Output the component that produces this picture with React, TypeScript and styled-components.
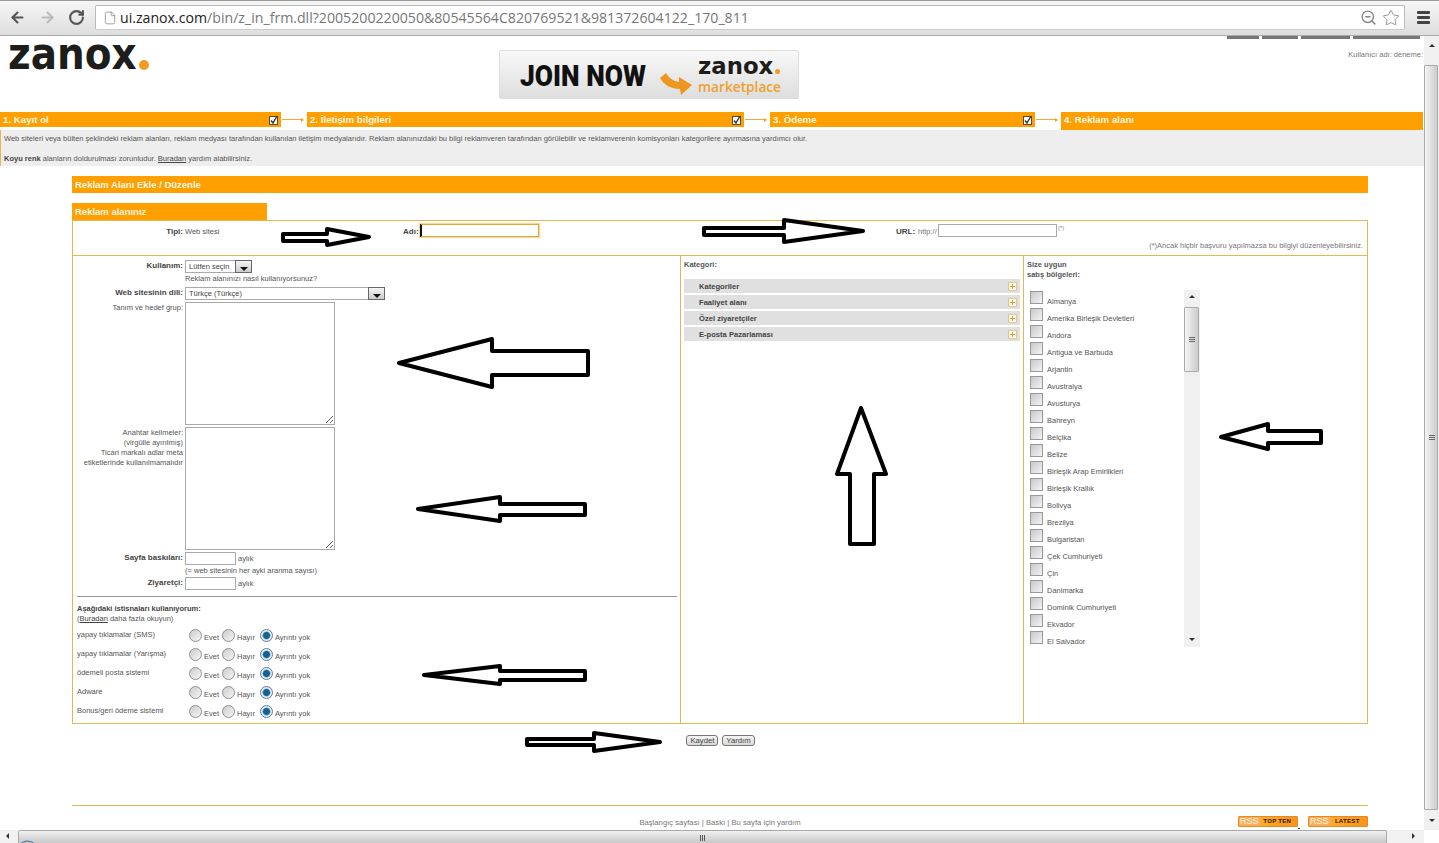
import * as React from 'react';
import styled, { createGlobalStyle } from 'styled-components';
import { ArrowLeft, ArrowRight, File, RotateCw, Star, ZoomOut } from 'lucide-react';

const ORANGE = '#ffa000';
const LINE = '#e8b552';
const TEXT = '#555';

const GlobalStyle = createGlobalStyle`
  html, body {
    margin: 0;
    padding: 0;
    overflow: hidden;
    background: #fff;
  }
  * {
    box-sizing: border-box;
  }
`;

const Page = styled.div`
  position: relative;
  display: grid;
  grid-template-rows: 36px 794px 13px;
  width: 1439px;
  height: 843px;
  overflow: hidden;
  font-family: 'Liberation Sans', Arial, sans-serif;
  font-size: 7.5px;
  color: ${TEXT};
  background: #fff;
`;

/* browser chrome */
const Toolbar = styled.div`
  display: flex;
  align-items: center;
  height: 36px;
  padding: 0 0 1px 9px;
  border-top: 1px solid #999;
  border-bottom: 1px solid #aaa;
  background: linear-gradient(#f6f6f6, #dedede);
`;

const NavIcon = styled.span<{ $gap: number }>`
  display: flex;
  margin-right: ${(p) => p.$gap}px;
`;

const Omnibox = styled.div`
  display: flex;
  align-items: center;
  width: 1310px;
  height: 25px;
  padding: 0 4px 0 7px;
  border: 1px solid #bbb;
  border-bottom-color: #ccc;
  border-radius: 2px;
  background: #fff;
`;

const UrlText = styled.div`
  flex: 1;
  margin-left: 3px;
  font-family: 'Open Sans', sans-serif;
  font-size: 14.15px;
  color: #777;
  white-space: nowrap;
  b {
    font-weight: 400;
    color: #222;
  }
`;

const MenuIcon = styled.div`
  display: flex;
  flex-direction: column;
  gap: 2px;
  width: 13px;
  margin-left: 12px;
  i {
    display: block;
    height: 3px;
    border-radius: 1px;
    background: #444;
  }
`;

/* viewport */
const Viewport = styled.div`
  display: grid;
  grid-template-columns: 1424px 15px;
  height: 794px;
`;

const Content = styled.div`
  min-width: 0;
`;

const Header = styled.div`
  display: grid;
  grid-template-columns: 499px 300px 1fr;
  height: 76px;
`;

const Logo = styled.div`
  display: flex;
  align-items: flex-start;
  height: 40px;
  padding-left: 8px;
  font-family: 'DejaVu Sans', sans-serif;
  font-size: 39px;
  font-weight: 700;
  line-height: 40px;
  color: #1d1d1b;
`;

const LogoWord = styled.span`
  display: inline-block;
  transform: scaleY(1.12);
  transform-origin: left 34px;
`;

const LogoDot = styled.i<{ $size: number; $top: number }>`
  display: block;
  flex: none;
  width: ${(p) => p.$size}px;
  height: ${(p) => p.$size}px;
  margin: ${(p) => p.$top}px 0 0 2px;
  border-radius: 50%;
  background: #f39c1f;
`;

const Banner = styled.div`
  display: flex;
  align-items: flex-start;
  width: 300px;
  height: 49px;
  margin-top: 14px;
  padding-left: 20px;
  border: 1px solid #ddd;
  border-radius: 2px;
  background: linear-gradient(#f8f8f8, #dedede);
`;

const JoinNow = styled.div`
  width: 139px;
  margin-top: 10px;
  font-family: 'Roboto', sans-serif;
  font-size: 30px;
  font-weight: 900;
  line-height: 30px;
  color: #111;
  transform: scaleX(0.88);
  transform-origin: left center;
  white-space: nowrap;
`;

const MarketArrowIcon = styled.svg`
  flex: none;
  margin-top: 19px;
`;

const BannerBrand = styled.div`
  margin: 7px 0 0 5px;
`;

const BannerZanox = styled.div`
  display: flex;
  align-items: flex-start;
  height: 17px;
  font-family: 'DejaVu Sans', sans-serif;
  font-size: 22.8px;
  font-weight: 700;
  line-height: 17px;
  color: #1d1d1b;
`;

const Marketplace = styled.div`
  margin-top: 4px;
  font-family: 'Open Sans', sans-serif;
  font-size: 13.7px;
  font-weight: 600;
  line-height: 15px;
  color: #f0a030;
  white-space: nowrap;
`;

const UserArea = styled.div`
  display: flex;
  flex-direction: column;
  align-items: flex-end;
  padding-right: 1px;
`;

const TopLinks = styled.div`
  display: flex;
  gap: 3px;
  margin-right: 3px;
`;

const TopLink = styled.i<{ $w: number }>`
  display: block;
  width: ${(p) => p.$w}px;
  height: 3px;
  background: #777;
`;

const UserName = styled.div`
  margin-top: 11px;
  color: #777;
`;

const Steps = styled.div`
  display: flex;
  align-items: flex-start;
  height: 18px;
`;

const Step = styled.div<{ $w: number; $current?: boolean }>`
  display: flex;
  align-items: center;
  justify-content: space-between;
  width: ${(p) => p.$w}px;
  height: ${(p) => (p.$current ? 18 : 15)}px;
  padding: ${(p) => (p.$current ? '0 0 3px 3px' : '0 3px 0 3px')};
  background: ${ORANGE};
  font-size: 9.7px;
  font-weight: 700;
  color: #fff6e0;
`;

const StepLink = styled.div`
  position: relative;
  flex: none;
  width: 26px;
  height: 15px;
  &::before {
    content: '';
    position: absolute;
    left: 1px;
    right: 4px;
    top: 7px;
    height: 1px;
    background: #f0a93a;
  }
  &::after {
    content: '';
    position: absolute;
    right: 3px;
    top: 5.5px;
    border-left: 3px solid ${ORANGE};
    border-top: 2px solid transparent;
    border-bottom: 2px solid transparent;
  }
`;

const Info = styled.div`
  height: 36px;
  padding: 4px 0 0 3px;
  border-left: 1px solid ${LINE};
  background: #eee;
  line-height: 10px;
  b {
    color: #444;
  }
  u {
    color: #444;
  }
`;

const InfoGap = styled.div`
  height: 10px;
`;

const Main = styled.div`
  width: 1296px;
  margin: 10px 0 0 72px;
`;

const TitleBar = styled.div`
  height: 17px;
  padding-left: 3px;
  background: ${ORANGE};
  font-size: 9.5px;
  font-weight: 700;
  line-height: 17px;
  color: #fff6e0;
`;

const Tab = styled(TitleBar)`
  width: 195px;
  margin-top: 10px;
`;

const TopBox = styled.div`
  position: relative;
  display: flex;
  height: 35px;
  padding-top: 3px;
  border: 1px solid ${LINE};
  border-bottom: 0;
`;

const Slot = styled.div<{ $w: number }>`
  display: flex;
  align-items: flex-start;
  flex: none;
  width: ${(p) => p.$w}px;
  line-height: 13px;
`;

const RightLabel = styled.span<{ $strong?: boolean }>`
  flex: none;
  width: 112px;
  padding: 1px 2px 0 0;
  text-align: right;
  white-space: nowrap;
  line-height: 10px;
  font-size: ${(p) => (p.$strong ? 8 : 7.5)}px;
  font-weight: ${(p) => (p.$strong ? 700 : 400)};
  color: ${(p) => (p.$strong ? '#444' : TEXT)};
`;

const TypeLabel = styled(RightLabel)`
  padding-top: 3px;
`;

const SlotText = styled.span`
  padding-top: 3px;
  line-height: 10px;
  white-space: nowrap;
`;

const InlineLabel = styled(SlotText)<{ $w: number; $strong?: boolean }>`
  flex: none;
  width: ${(p) => p.$w}px;
  font-size: ${(p) => (p.$strong ? 8 : 7.5)}px;
  font-weight: ${(p) => (p.$strong ? 700 : 400)};
  color: ${(p) => (p.$strong ? '#444' : '#777')};
`;

const RequiredMark = styled.span`
  margin-left: 1px;
  font-size: 6px;
  line-height: 8px;
  color: #888;
`;

const TextInput = styled.input<{ $w: number; $focus?: boolean }>`
  display: block;
  flex: none;
  width: ${(p) => p.$w}px;
  height: 13px;
  margin: 0;
  padding: 0 1px;
  border: 1px solid ${(p) => (p.$focus ? '#e2a93a' : '#aaa')};
  background: #fff;
  outline: none;
  ${(p) => p.$focus && 'box-shadow: 0 0 1px 1px #f6d9a0; border-left: 2px solid #111;'}
`;

const TopNote = styled.div`
  position: absolute;
  right: 4px;
  bottom: 5px;
  color: #777;
`;

const Columns = styled.div`
  display: grid;
  grid-template-columns: 608px 343px 1fr;
  height: 469px;
  border: 1px solid ${LINE};
`;

const FormColumn = styled.div`
  border-right: 1px solid ${LINE};
  padding-top: 4px;
`;

const FormGrid = styled.div`
  display: grid;
  grid-template-columns: 112px 1fr;
  row-gap: 2px;
`;

const Field = styled.div`
  display: flex;
  align-items: flex-start;
  line-height: 10px;
`;

const FieldNote = styled(Field)<{ $h: number }>`
  height: ${(p) => p.$h}px;
  line-height: 8px;
`;

const Suffix = styled.span`
  margin: 2px 0 0 2px;
`;

const SelectBox = styled.div<{ $w: number }>`
  display: flex;
  align-items: stretch;
  justify-content: space-between;
  width: ${(p) => p.$w}px;
  height: 13px;
  padding-left: 3px;
  border: 1px solid #aaa;
  line-height: 12px;
  white-space: nowrap;
  color: #444;
`;

const SelectArrow = styled.span`
  position: relative;
  flex: none;
  width: 17px;
  margin: -1px -1px -1px 0;
  border: 1px solid #666;
  background: linear-gradient(#f4f4f4, #ccc);
  &::after {
    content: '';
    position: absolute;
    left: 4px;
    bottom: 1px;
    border-top: 4px solid #111;
    border-left: 4px solid transparent;
    border-right: 4px solid transparent;
  }
`;

const Area = styled.textarea`
  display: block;
  width: 150px;
  height: 123px;
  margin: 0;
  padding: 2px;
  border: 1px solid #aaa;
  background: #fff;
  outline: none;
`;

const Rule = styled.div`
  height: 1px;
  margin: 6px 3px 7px 4px;
  background: #999;
`;

const Exceptions = styled.div`
  padding-left: 4px;
  line-height: 10px;
  b {
    color: #444;
  }
  u {
    color: #444;
  }
`;

const ExceptionRow = styled.div`
  display: flex;
  align-items: flex-start;
  height: 19px;
  &:first-of-type {
    margin-top: 2px;
  }
`;

const ExceptionName = styled.span`
  flex: none;
  width: 112px;
  padding-top: 4px;
`;

const RadioOption = styled.label<{ $w: number }>`
  display: flex;
  align-items: flex-start;
  flex: none;
  width: ${(p) => p.$w}px;
  padding-top: 3px;
  span {
    margin: 4px 0 0 2px;
  }
`;

const Radio = styled.input.attrs({ type: 'radio' })`
  appearance: none;
  flex: none;
  width: 13px;
  height: 13px;
  margin: 0;
  border: 1px solid #8f8f8f;
  border-radius: 50%;
  background: linear-gradient(135deg, #ccc, #f6f6f6);
  &:checked {
    background: radial-gradient(circle, #16618f 0 3px, #3d8ac0 3.4px, #e8eef3 4.4px);
    border-color: #5c7f99;
  }
`;

const CategoryColumn = styled.div`
  border-right: 1px solid ${LINE};
  padding: 4px 3px 0 3px;
`;

const ColumnTitle = styled.div`
  height: 19px;
  line-height: 10px;
  font-weight: 700;
  color: #555;
`;

const Categories = styled.div`
  display: flex;
  flex-direction: column;
  gap: 2px;
`;

const CategoryRow = styled.div`
  display: flex;
  align-items: center;
  justify-content: space-between;
  height: 14px;
  padding: 0 3px 0 15px;
  background: #e0e0e0;
  font-size: 7.6px;
  font-weight: 700;
  color: #444;
`;

const PlusBox = styled.i`
  position: relative;
  display: block;
  width: 9px;
  height: 9px;
  border: 1px solid #f4c27a;
  background: #fff;
  &::before,
  &::after {
    content: '';
    position: absolute;
    background: #ee9a1f;
  }
  &::before {
    left: 1px;
    right: 1px;
    top: 3px;
    height: 1px;
  }
  &::after {
    top: 1px;
    bottom: 1px;
    left: 3px;
    width: 1px;
  }
`;

const RegionColumn = styled.div`
  padding: 4px 0 0 3px;
`;

const RegionTitle = styled(ColumnTitle)`
  height: 30px;
`;

const RegionList = styled.div`
  display: grid;
  grid-template-columns: 157px 16px;
  width: 173px;
  height: 357px;
`;

const RegionItems = styled.div`
  padding-left: 3px;
`;

const RegionItem = styled.label`
  display: flex;
  align-items: flex-start;
  height: 17px;
  padding-top: 1px;
  span {
    margin: 6px 0 0 4px;
    line-height: 10px;
  }
`;

const Check = styled.input.attrs({ type: 'checkbox' })`
  appearance: none;
  flex: none;
  width: 13px;
  height: 13px;
  margin: 0;
  border: 1px solid #999;
  background: linear-gradient(135deg, #c8c8c8, #f4f4f4);
`;

const ScrollTrack = styled.div<{ $thumbTop: number; $thumbBottom: number }>`
  position: relative;
  height: 100%;
  background: #f0f0f0;
  &::before {
    content: '';
    position: absolute;
    top: ${(p) => p.$thumbTop}px;
    bottom: ${(p) => p.$thumbBottom}px;
    left: 0;
    right: 1px;
    border: 1px solid #aaa;
    border-radius: 1px;
    background: linear-gradient(90deg, #f4f4f4, #ccc);
  }
`;

const ArrowUp = styled.i<{ $top: number }>`
  position: absolute;
  top: ${(p) => p.$top}px;
  left: 50%;
  margin-left: -3px;
  border-bottom: 3px solid #333;
  border-left: 3px solid transparent;
  border-right: 3px solid transparent;
`;

const ArrowDown = styled.i<{ $bottom: number }>`
  position: absolute;
  bottom: ${(p) => p.$bottom}px;
  left: 50%;
  margin-left: -3px;
  border-top: 3px solid #333;
  border-left: 3px solid transparent;
  border-right: 3px solid transparent;
`;

const Grip = styled.i<{ $top: string }>`
  position: absolute;
  top: ${(p) => p.$top};
  left: 50%;
  width: 6px;
  height: 5px;
  margin: -2px 0 0 -3px;
  border-top: 1px solid #666;
  border-bottom: 1px solid #666;
  &::after {
    content: '';
    display: block;
    height: 1px;
    margin-top: 1px;
    background: #666;
  }
`;

const Actions = styled.div`
  display: flex;
  justify-content: center;
  gap: 4px;
  height: 81px;
  padding: 11px 0 0 1px;
`;

const ActionButton = styled.button`
  height: 11px;
  margin: 0;
  padding: 0 3px;
  border: 1px solid #777;
  border-radius: 3px;
  background: linear-gradient(#f4f4f4, #d8d8d8);
  font-family: inherit;
  font-size: 7.7px;
  line-height: 8px;
  color: #444;
`;

const Footer = styled.div`
  display: grid;
  grid-template-columns: 1fr 130px;
  height: 25px;
  padding-top: 10px;
  border-top: 1px solid ${LINE};
`;

const FooterLinks = styled.div`
  padding: 2px 0 0 130px;
  font-size: 7.7px;
  text-align: center;
  color: #777;
`;

const FeedBadges = styled.div`
  display: flex;
  gap: 10px;
`;

const FeedBadge = styled.div`
  display: flex;
  align-items: center;
  width: 60px;
  height: 11px;
  padding: 0 1px;
  border: 1px solid #e58a1c;
  border-radius: 1px;
  background: linear-gradient(90deg, #f8ae5f 0 20px, #ffa726 24px, #f7931e);
  font-size: 9px;
  line-height: 9px;
  color: #fff3dd;
  b {
    flex: 1;
    text-align: center;
    font-size: 6px;
    color: #2a1a00;
    letter-spacing: 0.3px;
  }
`;

const PageScroll = styled.div`
  background: #f2f2f2;
`;

const HorizontalBar = styled.div`
  display: grid;
  grid-template-columns: 18px 1369px 37px 15px;
  height: 13px;
`;

const HButton = styled.div`
  position: relative;
  background: #f2f2f2;
`;

const HThumb = styled.div`
  position: relative;
  border: 1px solid #aaa;
  border-bottom: 0;
  border-radius: 2px 2px 0 0;
  background: linear-gradient(#f0f0f0, #c8c8c8);
`;

const HArrow = styled.i<{ $dir: 'left' | 'right'; $x: number }>`
  position: absolute;
  top: 3px;
  left: ${(p) => p.$x}px;
  border-top: 3px solid transparent;
  border-bottom: 3px solid transparent;
  ${(p) => (p.$dir === 'left' ? 'border-right: 3px solid #333;' : 'border-left: 3px solid #333;')}
`;

const HGrip = styled.i`
  position: absolute;
  left: 681px;
  top: 4px;
  width: 5px;
  height: 6px;
  border-left: 1px solid #555;
  border-right: 1px solid #555;
  &::after {
    content: '';
    display: block;
    width: 1px;
    height: 6px;
    margin-left: 1px;
    background: #555;
  }
`;

const Annotations = styled.svg`
  position: absolute;
  left: 0;
  top: 0;
  pointer-events: none;
`;

const handDrawnArrows = [
  '283,234 327,234 327,229 369,237 327,245 327,241 283,241',
  '704,228 784,228 784,220 863,231 784,242 784,235 704,235',
  '588,351 492,351 492,339 399,363 492,387 492,375 588,375',
  '585,504 500,504 500,497 418,509 500,521 500,515 585,515',
  '850,544 850,474 837,474 861,408 886,474 874,474 874,544',
  '1321,431 1268,431 1268,424 1221,437 1268,449 1268,443 1321,443',
  '585,671 500,671 500,666 424,675 500,684 500,680 585,680',
  '527,739 594,739 594,733 660,742 594,751 594,745 527,745',
];

const regions = [
  'Almanya',
  'Amerika Birleşik Devletleri',
  'Andora',
  'Antigua ve Barbuda',
  'Arjantin',
  'Avustralya',
  'Avusturya',
  'Bahreyn',
  'Belçika',
  'Belize',
  'Birleşik Arap Emirlikleri',
  'Birleşik Krallık',
  'Bolivya',
  'Brezilya',
  'Bulgaristan',
  'Çek Cumhuriyeti',
  'Çin',
  'Danimarka',
  'Dominik Cumhuriyeti',
  'Ekvador',
  'El Salvador',
];

const exceptions = [
  'yapay tıklamalar (SMS)',
  'yapay tıklamalar (Yarışma)',
  'ödemeli posta sistemi',
  'Adware',
  'Bonus/geri ödeme sistemi',
];

const categories = ['Kategoriler', 'Faaliyet alanı', 'Özel ziyaretçiler', 'E-posta Pazarlaması'];

const StepCheck = () => (
  <svg width="9" height="10" viewBox="0 0 9 10">
    <rect x="0.5" y="1.5" width="8" height="8" fill="#fff" stroke="#5a4a30" />
    <path d="M2 5.5 L4 8 L8 1" fill="none" stroke="#333" strokeWidth="1.4" />
  </svg>
);

const MarketArrow = () => (
  <MarketArrowIcon width="34" height="26" viewBox="0 0 34 26">
    <path
      d="M1 8 L7 3 C10 8 14 11 20 12 L20 7 L33 15 L22 25 L21 19 C12 19 5 15 1 8 Z"
      fill="#ee9620"
    />
  </MarketArrowIcon>
);

export default function App() {
  return (
    <Page>
      <GlobalStyle />
      <Toolbar>
        <NavIcon $gap={13}>
          <ArrowLeft size={17} color="#555" strokeWidth={3} />
        </NavIcon>
        <NavIcon $gap={12}>
          <ArrowRight size={17} color="#bbb" strokeWidth={3} />
        </NavIcon>
        <NavIcon $gap={10}>
          <RotateCw size={17} color="#555" strokeWidth={3} />
        </NavIcon>
        <Omnibox>
          <File size={14} color="#888" strokeWidth={1.3} />
          <UrlText>
            <b>ui.zanox.com</b>/bin/z_in_frm.dll?2005200220050&amp;80545564C820769521&amp;981372604122_170_811
          </UrlText>
          <NavIcon $gap={5}>
            <ZoomOut size={17} color="#888" strokeWidth={2} />
          </NavIcon>
          <Star size={18} color="#888" strokeWidth={1.2} />
        </Omnibox>
        <MenuIcon>
          <i />
          <i />
          <i />
        </MenuIcon>
      </Toolbar>

      <Viewport>
        <Content>
          <Header>
            <Logo>
              <LogoWord>zanox</LogoWord>
              <LogoDot $size={10} $top={24} />
            </Logo>
            <Banner>
              <JoinNow>JOIN NOW</JoinNow>
              <MarketArrow />
              <BannerBrand>
                <BannerZanox>
                  zanox
                  <LogoDot $size={5} $top={11} />
                </BannerZanox>
                <Marketplace>marketplace</Marketplace>
              </BannerBrand>
            </Banner>
            <UserArea>
              <TopLinks>
                <TopLink $w={32} />
                <TopLink $w={36} />
                <TopLink $w={49} />
                <TopLink $w={67} />
              </TopLinks>
              <UserName>Kullanıcı adı: deneme:</UserName>
            </UserArea>
          </Header>

          <Steps>
            <Step $w={281}>
              1. Kayıt ol
              <StepCheck />
            </Step>
            <StepLink />
            <Step $w={437}>
              2. İletişim bilgileri
              <StepCheck />
            </Step>
            <StepLink />
            <Step $w={265}>
              3. Ödeme
              <StepCheck />
            </Step>
            <StepLink />
            <Step $w={362} $current>
              4. Reklam alanı
            </Step>
          </Steps>

          <Info>
            Web siteleri veya bülten şeklindeki reklam alanları, reklam medyası tarafından kullanılan iletişim
            medyalarıdır. Reklam alanınızdaki bu bilgi reklamveren tarafından görülebilir ve reklamverenin komisyonları
            kategorilere ayırmasına yardımcı olur.
            <InfoGap />
            <b>Koyu renk</b> alanların doldurulması zorunludur. <u>Buradan</u> yardım alabilirsiniz.
          </Info>

          <Main>
            <TitleBar>Reklam Alanı Ekle / Düzenle</TitleBar>
            <Tab>Reklam alanınız</Tab>
            <TopBox>
              <Slot $w={330}>
                <TypeLabel $strong>Tipi:</TypeLabel>
                <SlotText>Web sitesi</SlotText>
              </Slot>
              <Slot $w={493}>
                <InlineLabel $w={17} $strong>
                  Adı:
                </InlineLabel>
                <TextInput $w={119} $focus />
              </Slot>
              <Slot $w={300}>
                <InlineLabel $w={22} $strong>
                  URL:
                </InlineLabel>
                <InlineLabel $w={20}>http://</InlineLabel>
                <TextInput $w={119} />
                <RequiredMark>(*)</RequiredMark>
              </Slot>
              <TopNote>(*)Ancak hiçbir başvuru yapılmazsa bu bilgiyi düzenleyebilirsiniz.</TopNote>
            </TopBox>

            <Columns>
              <FormColumn>
                <FormGrid>
                  <RightLabel $strong>Kullanım:</RightLabel>
                  <SelectBox $w={67}>
                    Lütfen seçin
                    <SelectArrow />
                  </SelectBox>
                  <span />
                  <FieldNote $h={10}>Reklam alanınızı nasıl kullanıyorsunuz?</FieldNote>
                  <RightLabel $strong>Web sitesinin dili:</RightLabel>
                  <SelectBox $w={200}>
                    Türkçe (Türkçe)
                    <SelectArrow />
                  </SelectBox>
                  <RightLabel>Tanım ve hedef grup:</RightLabel>
                  <Area />
                  <RightLabel>
                    Anahtar kelimeler:
                    <br />
                    (virgülle ayırılmış)
                    <br />
                    Ticari markalı adlar meta
                    <br />
                    etiketlerinde kullanılmamalıdır
                  </RightLabel>
                  <Area />
                  <RightLabel $strong>Sayfa baskıları:</RightLabel>
                  <Field>
                    <TextInput $w={51} />
                    <Suffix>aylık</Suffix>
                  </Field>
                  <span />
                  <FieldNote $h={8}>(= web sitesinin her ayki aranma sayısı)</FieldNote>
                  <RightLabel $strong>Ziyaretçi:</RightLabel>
                  <Field>
                    <TextInput $w={51} />
                    <Suffix>aylık</Suffix>
                  </Field>
                </FormGrid>
                <Rule />
                <Exceptions>
                  <b>Aşağıdaki istisnaları kullanıyorum:</b>
                  <br />
                  (<u>Buradan</u> daha fazla okuyun)
                  {exceptions.map((name) => (
                    <ExceptionRow key={name}>
                      <ExceptionName>{name}</ExceptionName>
                      <RadioOption $w={33}>
                        <Radio name={name} />
                        <span>Evet</span>
                      </RadioOption>
                      <RadioOption $w={38}>
                        <Radio name={name} />
                        <span>Hayır</span>
                      </RadioOption>
                      <RadioOption $w={70}>
                        <Radio name={name} defaultChecked />
                        <span>Ayrıntı yok</span>
                      </RadioOption>
                    </ExceptionRow>
                  ))}
                </Exceptions>
              </FormColumn>

              <CategoryColumn>
                <ColumnTitle>Kategori:</ColumnTitle>
                <Categories>
                  {categories.map((name) => (
                    <CategoryRow key={name}>
                      {name}
                      <PlusBox />
                    </CategoryRow>
                  ))}
                </Categories>
              </CategoryColumn>

              <RegionColumn>
                <RegionTitle>
                  Size uygun
                  <br />
                  satış bölgeleri:
                </RegionTitle>
                <RegionList>
                  <RegionItems>
                    {regions.map((name) => (
                      <RegionItem key={name}>
                        <Check />
                        <span>{name}</span>
                      </RegionItem>
                    ))}
                  </RegionItems>
                  <ScrollTrack $thumbTop={17} $thumbBottom={275}>
                    <ArrowUp $top={5} />
                    <Grip $top="49px" />
                    <ArrowDown $bottom={6} />
                  </ScrollTrack>
                </RegionList>
              </RegionColumn>
            </Columns>

            <Actions>
              <ActionButton>Kaydet</ActionButton>
              <ActionButton>Yardım</ActionButton>
            </Actions>

            <Footer>
              <FooterLinks>Başlangıç sayfası | Baskı | Bu sayfa için yardım</FooterLinks>
              <FeedBadges>
                <FeedBadge>
                  RSS<b>TOP TEN</b>
                </FeedBadge>
                <FeedBadge>
                  RSS<b>LATEST</b>
                </FeedBadge>
              </FeedBadges>
            </Footer>
          </Main>
        </Content>

        <PageScroll>
          <ScrollTrack $thumbTop={29} $thumbBottom={20}>
            <ArrowUp $top={8} />
            <Grip $top="401px" />
            <ArrowDown $bottom={8} />
          </ScrollTrack>
        </PageScroll>
      </Viewport>

      <HorizontalBar>
        <HButton>
          <HArrow $dir="left" $x={6} />
        </HButton>
        <HThumb>
          <HGrip />
        </HThumb>
        <HButton>
          <HArrow $dir="right" $x={25} />
        </HButton>
        <span />
      </HorizontalBar>

      <Annotations width="1439" height="843">
        {handDrawnArrows.map((points) => (
          <polygon
            key={points}
            points={points}
            fill="#fff"
            stroke="#000"
            strokeWidth={4}
            strokeLinejoin="round"
          />
        ))}
        <path d="M20 844 Q27 838 35 844" fill="none" stroke="#2b6c9b" strokeWidth={1} />
        <rect x="1298" y="828" width="2" height="1" fill="#334" />
      </Annotations>
    </Page>
  );
}
